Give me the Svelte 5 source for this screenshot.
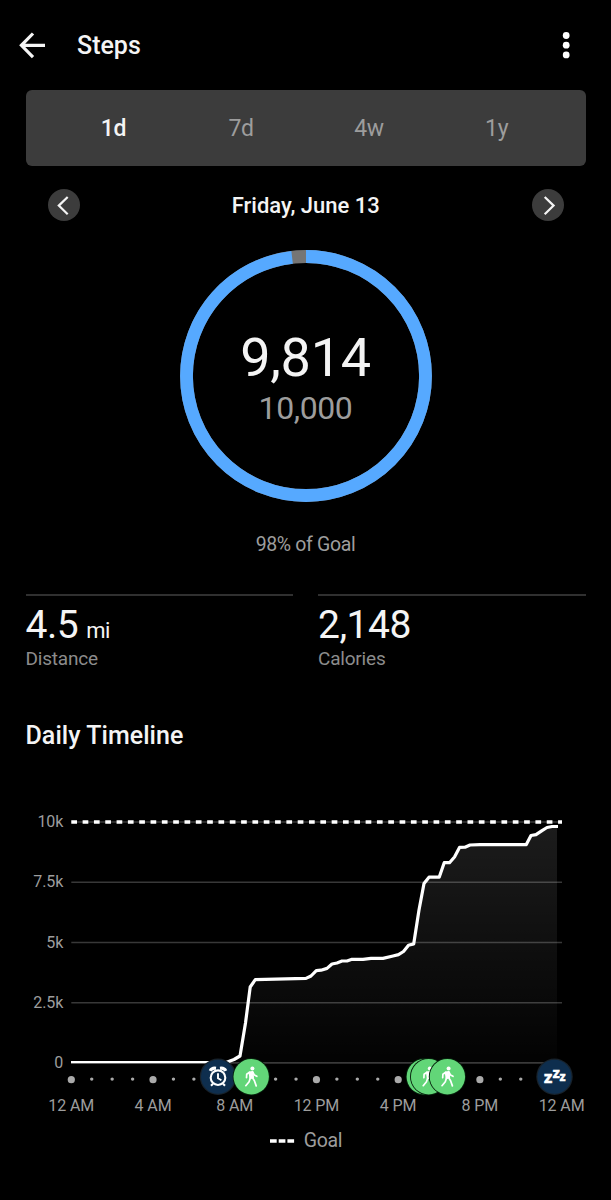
<script lang="ts">
  const ranges = ['1d', '7d', '4w', '1y']
  let selected = $state('1d')

  const radius = 119.5
  const circumference = 2 * Math.PI * radius
  const progress = 0.981

  const stats = [
    { value: '4.5', unit: 'mi', label: 'Distance' },
    { value: '2,148', unit: '', label: 'Calories' },
  ]

  const gridLines = [
    { label: '10k', y: 32 },
    { label: '7.5k', y: 92.2 },
    { label: '5k', y: 152.5 },
    { label: '2.5k', y: 212.7 },
    { label: '0', y: 272.9 },
  ]

  const hours = ['12 AM', '4 AM', '8 AM', '12 PM', '4 PM', '8 PM', '12 AM']

  const left = 71.3
  const hourWidth = 20.43
  const ticks = Array.from({ length: 25 }, (_, i) => i)

  const steps = [
    [71, 272.5], [226, 272.5], [234, 269.5], [240, 266], [245.5, 233], [250.2, 197],
    [255.3, 189.6], [306, 188.4], [311, 186], [316.3, 180.6], [321, 180.2], [327, 178.4],
    [332, 174], [337, 173], [342, 171], [347, 171], [352, 169.3], [363, 169.4],
    [371, 168.4], [383, 168.4], [393, 166], [398.5, 164.6], [403.5, 161.5], [408.5, 155.2],
    [413.7, 153.9], [419, 120], [424, 93.5], [429, 87.2], [439.2, 87.2], [444.2, 72.7],
    [449.5, 72.7], [454.5, 67], [459.5, 57.4], [465, 57.2], [470, 55], [480, 54.6],
    [526.3, 54.6], [531, 45.5], [536, 44.6], [542, 40.6], [547, 37.5], [552, 36.5], [558, 36.5],
  ]
  const line = steps.map(([x, y]) => `${x},${y}`).join(' ')
  const area = `71,273 ${line} 557,36.5 557,273`

  const markers = [
    { type: 'alarm', x: 218 },
    { type: 'walk', x: 251.2 },
    { type: 'walk', x: 424.3 },
    { type: 'walk', x: 428.6 },
    { type: 'walk', x: 447.4 },
    { type: 'sleep', x: 554.5 },
  ]
</script>

<div class="screen">
  <header>
    <button class="icon-btn" aria-label="Back">
      <svg width="28" height="28" viewBox="0 0 28 28">
        <path d="M27 14.3H4M15 2.5 3.4 14.3 15 26.1" fill="none" stroke="#f4f4f4" stroke-width="3.2" />
      </svg>
    </button>
    <h1>Steps</h1>
    <button class="icon-btn menu" aria-label="More options">
      <svg width="8" height="28" viewBox="0 0 8 28">
        <circle cx="4.2" cy="4.5" r="3.4" />
        <circle cx="4.2" cy="14.2" r="3.4" />
        <circle cx="4.2" cy="23.9" r="3.4" />
      </svg>
    </button>
  </header>

  <nav class="tabs">
    {#each ranges as range}
      <button class="tab" class:active={selected === range} onclick={() => (selected = range)}>{range}</button>
    {/each}
  </nav>

  <div class="date-row">
    <button class="round" aria-label="Previous day">
      <svg width="32" height="32" viewBox="0 0 32 32"><path d="M19.7 8 10.8 16.6l8.9 8.7" /></svg>
    </button>
    <span class="date">Friday, June 13</span>
    <button class="round" aria-label="Next day">
      <svg width="32" height="32" viewBox="0 0 32 32"><path d="m12.7 8 8.9 8.6-8.9 8.7" /></svg>
    </button>
  </div>

  <section class="goal">
    <div class="ring">
      <svg width="252" height="252" viewBox="0 0 252 252">
        <circle cx="126" cy="126" r={radius} stroke="#757575" />
        <circle
          cx="126"
          cy="126"
          r={radius}
          stroke="#56a9ff"
          stroke-dasharray="{circumference * progress} {circumference}"
          transform="rotate(-90 126 126)"
        />
      </svg>
      <div class="ring-text">
        <span class="count">9,814</span>
        <span class="target">10,000</span>
      </div>
    </div>
    <p class="percent">98% of Goal</p>
  </section>

  <section class="stats">
    {#each stats as stat}
      <div class="stat">
        <div class="stat-value">{stat.value}{#if stat.unit}<span class="unit">{stat.unit}</span>{/if}</div>
        <div class="stat-label">{stat.label}</div>
      </div>
    {/each}
  </section>

  <h2>Daily Timeline</h2>

  <svg class="chart" width="611" height="330" viewBox="0 0 611 330">
    <defs>
      <linearGradient id="fade" x1="0" y1="0" x2="0" y2="1">
        <stop offset="0" stop-color="#fff" stop-opacity="0.11" />
        <stop offset="1" stop-color="#fff" stop-opacity="0.01" />
      </linearGradient>
    </defs>

    <polygon points={area} fill="url(#fade)" />

    {#each gridLines as grid}
      <line x1="71.3" x2="562" y1={grid.y} y2={grid.y} stroke="#fff" stroke-opacity="0.22" stroke-width="1.6" />
      <text class="axis" x="63.2" y={grid.y + 5} text-anchor="end">{grid.label}</text>
    {/each}

    <line x1="71.3" x2="562" y1="32" y2="32" stroke="#fff" stroke-width="3.6" stroke-dasharray="5.7 5.62" />
    <polyline points={line} fill="none" stroke="#fff" stroke-width="3.2" stroke-linejoin="round" />
    <!-- the part of the line below the zero mark is hidden -->
    <rect x="70" y="273.4" width="160" height="3" fill="#000" />

    {#each ticks as i}
      <circle
        cx={left + i * hourWidth}
        cy={i % 4 === 0 ? 289.7 : 289.1}
        r={i % 4 === 0 ? 3.6 : 1.7}
        fill="#aaa"
      />
    {/each}

    {#each hours as hour, i}
      <text class="axis" x={left + i * hourWidth * 4} y="321.4" text-anchor="middle">{hour}</text>
    {/each}

    {#each markers as marker}
      <g transform="translate({marker.x} 286.7)">
        {#if marker.type === 'walk'}
          <circle r="18.6" fill="#06200c" />
          <circle r="17.7" fill="#62d678" />
          <g fill="#fff" stroke="#fff" stroke-linecap="round" stroke-linejoin="round">
            <circle cx="1.2" cy="-8.2" r="2" stroke="none" />
            <path d="M-1.8-4.4 1.4-5 2 .6-1 1.8z" stroke-width="1.6" />
            <path
              d="M-1.6-4.4-4.5-2.4-4.7 1M1.6-4.6 3.2-1.6 5.6-.4M-.8 1-2.1 5-5.4 9M1.2.8 3.2 4 5 9.2"
              fill="none"
              stroke-width="1.7"
            />
          </g>
        {:else if marker.type === 'alarm'}
          <circle r="18.2" fill="#18222b" />
          <circle r="17" fill="#0e2e4e" />
          <g fill="none" stroke="#fff" stroke-width="2.1">
            <circle cy="1" r="7.3" />
            <path d="M0-3.4V1.6L3.4 3.6" stroke-width="1.9" />
            <path d="M-5 7-7 9M5 7 7 9" />
            <path d="M-7.8-5.8C-6.8-7.8-4.8-8.8-2-8.4M7.8-5.8C6.8-7.8 4.8-8.8 2-8.4" stroke-width="3.2" />
          </g>
        {:else}
          <circle r="18.2" fill="#18222b" />
          <circle r="17" fill="#0e2e4e" />
          <text class="zzz" x="-10.8" y="5.8" font-size="17">z</text>
          <text class="zzz" x="-2.1" y="1.2" font-size="14.5">z</text>
          <text class="zzz" x="4.9" y="3.8" font-size="12">z</text>
        {/if}
      </g>
    {/each}
  </svg>

  <div class="legend">
    <svg width="25" height="4" viewBox="0 0 25 4">
      <path d="M0 2h6.7M8.7 2h6.7M17.4 2h6.7" stroke="#fff" stroke-width="3.6" />
    </svg>
    <span>Goal</span>
  </div>
</div>

<style>
  :global(body) {
    background: #000;
  }

  .screen {
    width: 611px;
    height: 1200px;
    overflow: hidden;
    background: #000;
    color: #f4f4f4;
    font-family: Roboto, 'Liberation Sans', sans-serif;
  }

  button {
    background: none;
    border: none;
    padding: 0;
    color: inherit;
    font-family: inherit;
    cursor: pointer;
  }

  svg {
    display: block;
  }

  header {
    display: flex;
    align-items: center;
    height: 90px;
    padding: 0 41px 0 18px;
  }

  h1 {
    margin: 0 0 0 31px;
    padding-top: 2px;
    font-size: 25px;
    font-weight: 500;
    line-height: 30px;
  }

  .menu {
    margin-left: auto;
    fill: #fff;
  }

  .tabs {
    display: flex;
    height: 76px;
    margin: 0 25.5px;
    padding: 0 25px 0 24px;
    border-radius: 6px;
    background: #3c3c3c;
  }

  .tab {
    flex: 1;
    font-size: 23px;
    letter-spacing: -0.4px;
    color: #9d9d9d;
  }

  .tab.active {
    color: #f4f4f4;
    font-weight: 500;
  }

  .date-row {
    display: flex;
    align-items: center;
    justify-content: space-between;
    height: 78px;
    padding: 0 47.5px 0 48px;
  }

  .round {
    width: 32px;
    height: 32px;
    border-radius: 50%;
    background: #3c3c3c;
  }

  .round path {
    fill: none;
    stroke: #f4f4f4;
    stroke-width: 2.2;
  }

  .date {
    font-size: 22px;
    font-weight: 500;
  }

  .goal {
    display: flex;
    flex-direction: column;
    align-items: center;
    height: 344px;
    padding-top: 6px;
    box-sizing: border-box;
  }

  .ring {
    display: grid;
  }

  .ring > * {
    grid-area: 1 / 1;
  }

  .ring circle {
    fill: none;
    stroke-width: 12.8;
  }

  .ring-text {
    display: flex;
    flex-direction: column;
    align-items: center;
    padding-top: 77px;
  }

  .count {
    font-size: 54px;
    line-height: 62px;
    letter-spacing: -0.3px;
  }

  .target {
    font-size: 32px;
    line-height: 38px;
    letter-spacing: -0.4px;
    color: #9d9d9d;
  }

  .percent {
    margin: 30px 0 0;
    font-size: 19.5px;
    line-height: 25px;
    letter-spacing: -0.35px;
    color: #9d9d9d;
  }

  .stats {
    display: flex;
    gap: 25px;
    margin: 6px 25.5px 0;
  }

  .stat {
    flex: 1;
    border-top: 2px solid #303030;
  }

  .stat-value {
    height: 46px;
    padding-top: 6px;
    font-size: 39px;
    line-height: 46px;
    letter-spacing: -0.5px;
  }

  .unit {
    margin-left: 8px;
    font-size: 22px;
  }

  .stat-label {
    font-size: 19px;
    line-height: 22px;
    letter-spacing: -0.2px;
    color: #8c8c8c;
  }

  h2 {
    margin: 51px 0 0 25.5px;
    font-size: 25px;
    font-weight: 500;
    line-height: 30px;
    letter-spacing: 0.05px;
  }

  .chart {
    margin-top: 39px;
  }

  .axis {
    fill: #9d9d9d;
    font-size: 16px;
    letter-spacing: -0.1px;
  }

  .zzz {
    fill: #fff;
    stroke: #fff;
    stroke-width: 0.3;
    font-weight: 900;
  }

  .legend {
    display: flex;
    align-items: center;
    justify-content: center;
    gap: 9px;
    margin-top: 8px;
    padding-left: 1px;
    font-size: 19.5px;
    line-height: 25px;
    letter-spacing: -0.3px;
    color: #9d9d9d;
  }
</style>
